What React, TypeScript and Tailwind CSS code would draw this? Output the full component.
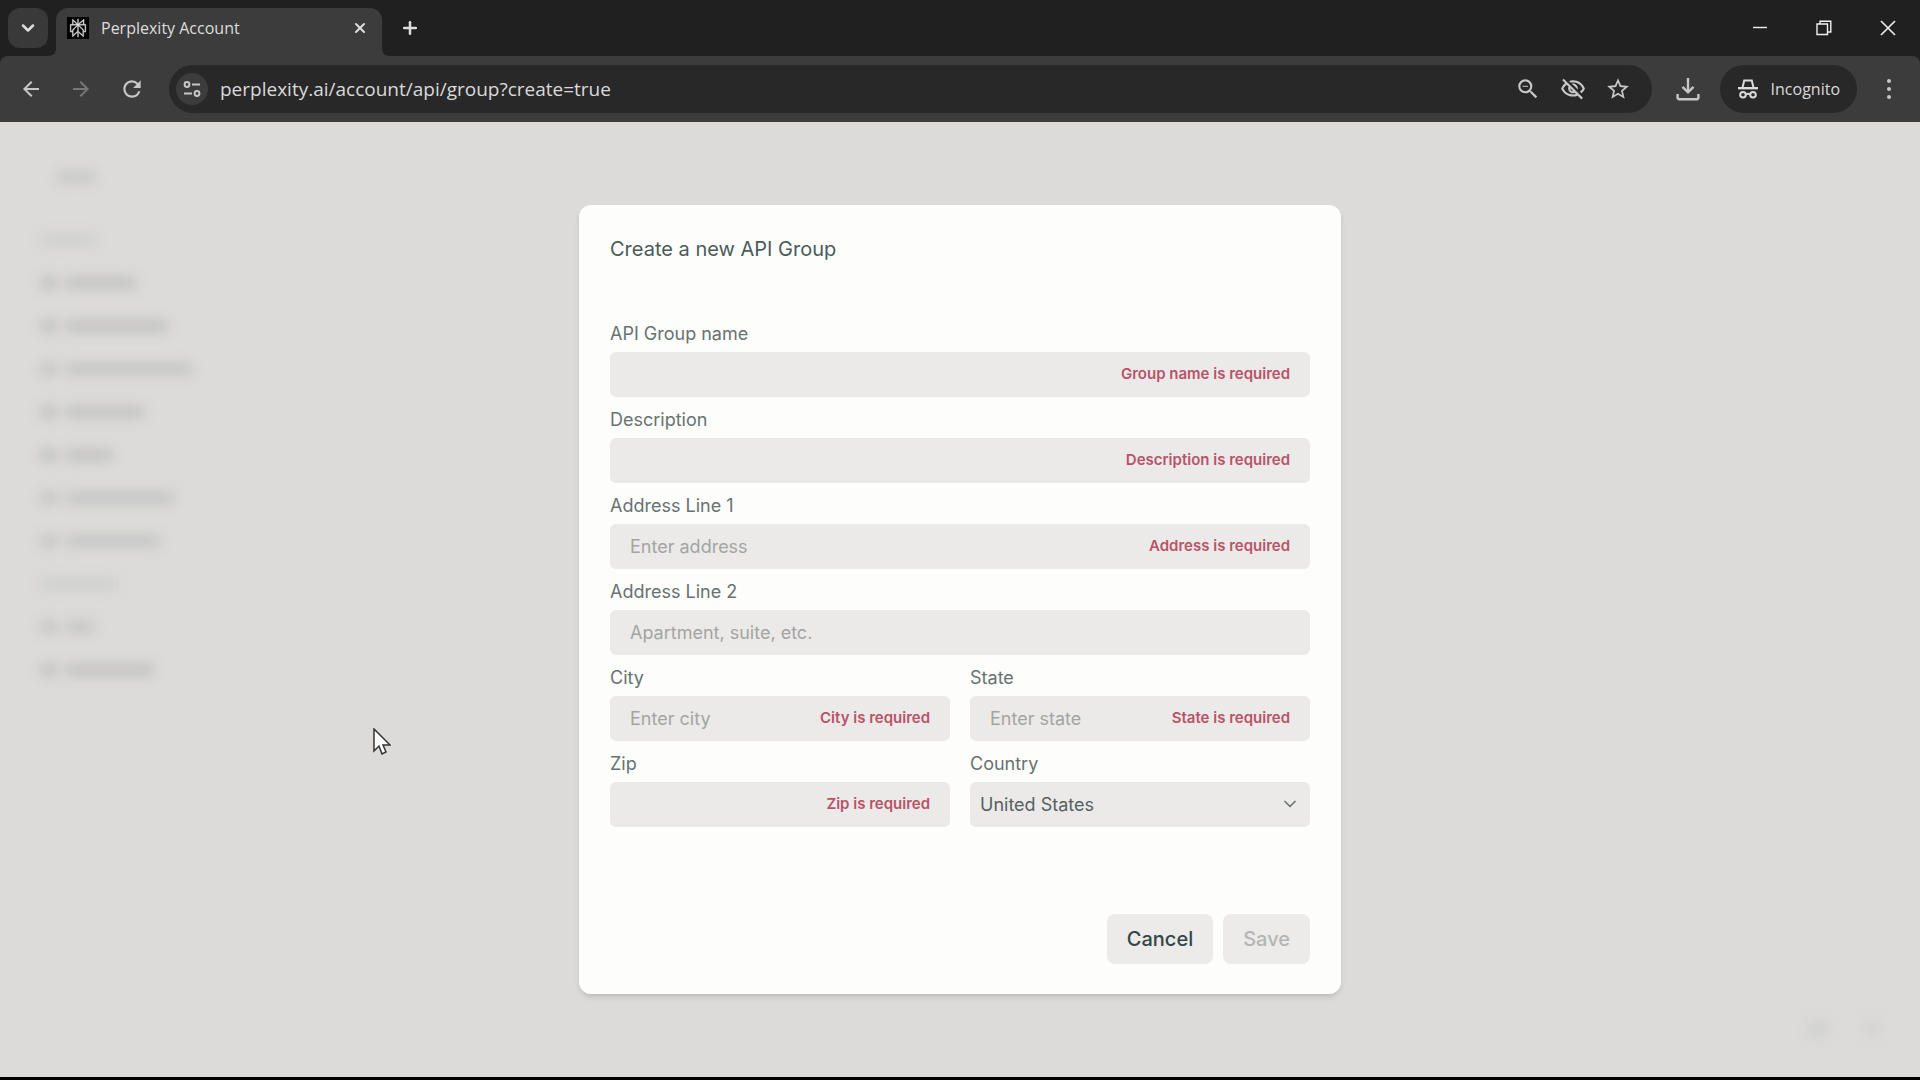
import type { ReactNode } from "react";
import {
  MdArrowBack,
  MdArrowForward,
  MdOutlineVisibilityOff,
  MdRefresh,
  MdStarOutline,
  MdZoomOut,
} from "react-icons/md";
import { SiPerplexity } from "react-icons/si";
import { ChevronDown, Plus, X } from "lucide-react";

const sidebarRows = [
  { icon: false, width: "w-10", tone: "bg-[#cbcbca]" },
  { icon: false, width: "w-14", tone: "bg-[#d1d1d0]" },
  { icon: true, width: "w-[70px]", tone: "bg-[#c6c6c5]" },
  { icon: true, width: "w-[102px]", tone: "bg-[#c6c6c5]" },
  { icon: true, width: "w-[126px]", tone: "bg-[#c8c8c7]" },
  { icon: true, width: "w-[78px]", tone: "bg-[#c6c6c5]" },
  { icon: true, width: "w-[46px]", tone: "bg-[#c6c6c5]" },
  { icon: true, width: "w-[108px]", tone: "bg-[#c8c8c7]" },
  { icon: true, width: "w-[94px]", tone: "bg-[#c8c8c7]" },
  { icon: false, width: "w-[76px]", tone: "bg-[#d1d1d0]" },
  { icon: true, width: "w-7", tone: "bg-[#c8c8c7]" },
  { icon: true, width: "w-[88px]", tone: "bg-[#c6c6c5]" },
];

const fields = [
  { id: "name", label: "API Group name", placeholder: "", error: "Group name is required", half: false },
  { id: "description", label: "Description", placeholder: "", error: "Description is required", half: false },
  { id: "address1", label: "Address Line 1", placeholder: "Enter address", error: "Address is required", half: false },
  { id: "address2", label: "Address Line 2", placeholder: "Apartment, suite, etc.", error: "", half: false },
  { id: "city", label: "City", placeholder: "Enter city", error: "City is required", half: true },
  { id: "state", label: "State", placeholder: "Enter state", error: "State is required", half: true },
  { id: "zip", label: "Zip", placeholder: "", error: "Zip is required", half: true },
];

function IconButton({ label, className = "", children }: { label: string; className?: string; children: ReactNode }) {
  return (
    <button
      type="button"
      aria-label={label}
      className={`flex shrink-0 items-center justify-center rounded-full ${className}`}
    >
      {children}
    </button>
  );
}

function TuneIcon() {
  return (
    <svg viewBox="0 0 20 20" className="h-5 w-5" fill="none" stroke="currentColor" strokeWidth="2">
      <circle cx="5" cy="5.500" r="2.400" />
      <path d="M10 5.500h8M2 14.500h8" />
      <circle cx="15" cy="14.500" r="2.400" />
    </svg>
  );
}

function DownloadIcon() {
  return (
    <svg viewBox="0 0 24 24" className="h-6 w-6" fill="none" stroke="currentColor" strokeWidth="2.400">
      <path d="M12 1v14M6.500 9.800l5.500 5.500 5.500-5.500M1.600 17v3.600q0 1.600 1.600 1.600h17.600q1.600 0 1.600-1.600V17" />
    </svg>
  );
}

function IncognitoIcon() {
  return (
    <svg viewBox="0 0 22 22" className="h-[22px] w-[22px]" fill="none" stroke="currentColor" strokeWidth="2">
      <path d="M5.600 9.200 7.200 2.600h7.600l1.600 6.600" />
      <path d="M1 10.200h20" strokeWidth="2.400" />
      <circle cx="6" cy="16.800" r="2.800" />
      <circle cx="16" cy="16.800" r="2.800" />
      <path d="M8.800 16.400q2.200-1.400 4.400 0" />
    </svg>
  );
}

function TabStrip() {
  return (
    <div className="flex h-14 items-end bg-[#202020] text-[#dedede]">
      <div className="flex h-12 items-start pl-2">
        <IconButton label="Search tabs" className="h-10 w-10 rounded-xl bg-[#393939]">
          <ChevronDown className="h-5 w-5" strokeWidth={3} />
        </IconButton>
      </div>
      <svg viewBox="0 0 10 10" className="h-2 w-2 text-[#3c3c3c]" fill="currentColor">
        <path d="M10 0v10H0Q10 10 10 0" />
      </svg>
      <div className="flex h-12 w-[326px] items-center rounded-t-xl bg-[#3c3c3c] pr-2 pb-2 pl-[11px]">
        <span className="mr-3 flex h-[22px] w-[22px] items-center justify-center bg-black">
          <SiPerplexity className="h-[18px] w-[18px] overflow-visible" stroke="currentColor" strokeWidth="0.500" />
        </span>
        <span className="flex-1 text-base">Perplexity Account</span>
        <IconButton label="Close tab" className="h-7 w-7">
          <X className="h-4 w-4" strokeWidth={3} />
        </IconButton>
      </div>
      <svg viewBox="0 0 10 10" className="h-2 w-2 text-[#3c3c3c]" fill="currentColor">
        <path d="M0 0v10h10Q0 10 0 0" />
      </svg>
      <div className="flex h-12 flex-1 items-start justify-between">
        <IconButton label="New tab" className="mt-1 ml-1 h-8 w-8">
          <Plus className="h-5 w-5" strokeWidth={3} />
        </IconButton>
        <div className="flex text-[#f0f0f0]">
          <IconButton label="Minimize" className="h-10 w-16">
            <svg viewBox="0 0 16 16" className="h-4 w-4" stroke="currentColor" strokeWidth="1.400">
              <path d="M1 7.500h14" />
            </svg>
          </IconButton>
          <IconButton label="Restore" className="h-10 w-16">
            <svg viewBox="0 0 16 16" className="h-4 w-4" fill="none" stroke="currentColor" strokeWidth="1.400">
              <path d="M1 4h10.500v10.500H1zM4 4V1.200h10.800V12h-3" />
            </svg>
          </IconButton>
          <IconButton label="Close" className="h-10 w-16">
            <svg viewBox="0 0 16 16" className="h-4 w-4" stroke="currentColor" strokeWidth="1.600">
              <path d="m1 1 14 14M15 1 1 15" />
            </svg>
          </IconButton>
        </div>
      </div>
    </div>
  );
}

function Toolbar() {
  return (
    <div className="bg-[#202020]">
      <div className="flex h-[66px] items-center rounded-t-lg bg-[#3c3c3c] px-[11px] text-[#c7c7c7]">
        <IconButton label="Back" className="mr-[10px] h-10 w-10">
          <MdArrowBack className="h-6 w-6" />
        </IconButton>
        <IconButton label="Forward" className="mr-[11px] h-10 w-10 text-[#777]">
          <MdArrowForward className="h-6 w-6" />
        </IconButton>
        <IconButton label="Reload" className="mr-[17px] h-10 w-10">
          <MdRefresh className="h-[26px] w-[26px]" />
        </IconButton>
        <div className="flex h-12 flex-1 items-center rounded-full bg-[#282828] pr-[18px] pl-[7px]">
          <IconButton label="View site information" className="h-8 w-8 bg-[#3c3c3c]">
            <TuneIcon />
          </IconButton>
          <input
            aria-label="Address"
            defaultValue="perplexity.ai/account/api/group?create=true"
            className="ml-3 min-w-0 flex-1 bg-transparent text-[19px] text-[#dadada] outline-none"
          />
          <div className="flex gap-[13px]">
            <IconButton label="Zoom" className="h-8 w-8">
              <MdZoomOut className="h-[26px] w-[26px]" />
            </IconButton>
            <IconButton label="Third-party cookies blocked" className="h-8 w-8">
              <MdOutlineVisibilityOff className="h-[26px] w-[26px]" />
            </IconButton>
            <IconButton label="Bookmark this tab" className="h-8 w-8">
              <MdStarOutline className="h-[26px] w-[26px]" />
            </IconButton>
          </div>
        </div>
        <IconButton label="Downloads" className="mr-3 ml-4 h-10 w-10">
          <DownloadIcon />
        </IconButton>
        <button
          type="button"
          className="flex h-12 shrink-0 items-center gap-3 rounded-full bg-[#282828] px-[17px] text-base text-[#dadada]"
        >
          <IncognitoIcon />
          Incognito
        </button>
        <IconButton label="Menu" className="ml-3 h-10 w-10">
          <svg viewBox="0 0 20 20" className="h-5 w-5" fill="currentColor">
            <circle cx="10" cy="2" r="2" />
            <circle cx="10" cy="10" r="2" />
            <circle cx="10" cy="18" r="2" />
          </svg>
        </IconButton>
      </div>
    </div>
  );
}

function SidebarBackdrop() {
  return (
    <div aria-hidden="true" className="absolute inset-0 flex items-start justify-between overflow-hidden blur-[6px]">
      <div className="flex w-72 flex-col gap-[29px] pt-12 pl-10">
        {sidebarRows.map((row, index) => (
          <div key={index} className={`flex h-[14px] items-center gap-2 ${index === 0 ? "mb-5 pl-4" : ""}`}>
            {row.icon && <span className={`h-[14px] w-[18px] ${row.tone}`} />}
            <span className={`h-[14px] ${row.width} ${row.tone}`} />
          </div>
        ))}
      </div>
      <div className="flex gap-9 self-end pr-10 pb-10">
        <span className="h-4 w-5 bg-[#d1d1d0]" />
        <span className="h-4 w-4 bg-[#d4d4d3]" />
      </div>
    </div>
  );
}

function GroupDialog() {
  return (
    <form
      role="dialog"
      aria-labelledby="dialog-title"
      className="relative w-full max-w-[762px] rounded-xl bg-[#fdfdfb] px-[31px] py-[30px] font-['Inter',sans-serif] shadow-md"
    >
      <h1 id="dialog-title" className="text-xl leading-7 text-[#4b5b5b]">
        Create a new API Group
      </h1>
      <div className="mt-[58px] grid grid-cols-2 gap-x-5 gap-y-[10px]">
        {fields.map((field) => (
          <div key={field.id} className={field.half ? "" : "col-span-2"}>
            <label htmlFor={field.id} className="mb-[5px] block text-lg leading-[26px] text-[#687272]">
              {field.label}
            </label>
            <div className="flex h-[45px] items-center rounded-md bg-[#ebeae8] px-5">
              <input
                id={field.id}
                placeholder={field.placeholder}
                className="min-w-0 flex-1 bg-transparent text-lg text-[#4b5b5b] outline-none placeholder:text-[#a3a5a3]"
              />
              {field.error && (
                <span className="shrink-0 text-[15px] font-semibold text-[#b9536a]">{field.error}</span>
              )}
            </div>
          </div>
        ))}
        <div>
          <label htmlFor="country" className="mb-[5px] block text-lg leading-[26px] text-[#687272]">
            Country
          </label>
          <div className="relative">
            <select
              id="country"
              className="h-[45px] w-full appearance-none rounded-md bg-[#ebeae8] px-[10px] text-lg text-[#566161] outline-none"
            >
              <option>United States</option>
            </select>
            <ChevronDown className="pointer-events-none absolute top-3 right-[10px] h-5 w-5 text-[#687272]" />
          </div>
        </div>
      </div>
      <div className="mt-[87px] flex justify-end gap-[10px]">
        <button type="button" className="h-[50px] rounded-lg bg-[#ecebe9] px-5 text-xl font-medium text-[#33474a]">
          Cancel
        </button>
        <button
          type="submit"
          disabled
          className="h-[50px] rounded-lg bg-[#ecebe9] px-5 text-xl font-medium text-[#b3b6b5]"
        >
          Save
        </button>
      </div>
    </form>
  );
}

export default function App() {
  return (
    <div className="flex min-h-screen flex-col border-b-[3px] border-black bg-[#dcdbd9] font-['Open_Sans',sans-serif]">
      <header>
        <TabStrip />
        <Toolbar />
      </header>
      <main className="relative flex flex-1 items-center justify-center py-6">
        <SidebarBackdrop />
        <GroupDialog />
        <svg viewBox="0 0 18 28" className="absolute top-[606px] left-[373px] h-7 w-[18px]">
          <path d="M1 1v22l5-5 3 8 4-2-3-7h7z" fill="#fff" stroke="#333" strokeWidth="1.500" />
        </svg>
      </main>
    </div>
  );
}
